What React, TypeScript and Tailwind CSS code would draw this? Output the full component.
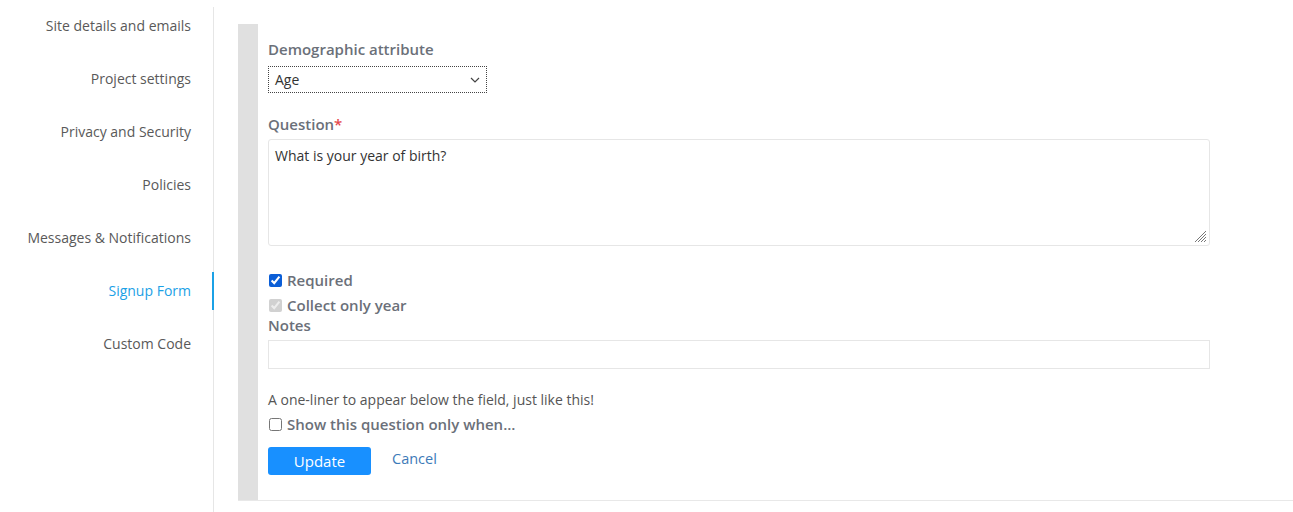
import React from "react";

const navItems = [
  "Site details and emails",
  "Project settings",
  "Privacy and Security",
  "Policies",
  "Messages & Notifications",
  "Signup Form",
  "Custom Code",
];

export default function App() {
  return (
    <div
      className="flex min-h-[512px] bg-white text-[#555]"
      style={{ fontFamily: '"Open Sans", "Liberation Sans", sans-serif' }}
    >
      <aside className="w-[214px] shrink-0 mt-[7px] border-r border-[#e6e6e6]">
        <ul className="-mt-[8px]">
          {navItems.map((item) => {
            const active = item === "Signup Form";
            return (
              <li
                key={item}
                className={`relative h-[53px] flex items-center justify-end pr-[22px] text-[14px] ${
                  active ? "text-[#1ba1e6]" : "text-[#595959]"
                }`}
              >
                {item}
                {active && (
                  <span className="absolute right-[-1px] top-[8px] h-[38px] w-[2px] bg-[#1ba1e6]" />
                )}
              </li>
            );
          })}
        </ul>
      </aside>

      <main className="flex-1 pl-[24px] pt-[24px] h-[501px]">
        <div className="flex h-[477px] border-b border-[#e8e8e8]">
          <div className="w-[20px] shrink-0 bg-[#e0e0e0]" />
          <div className="flex-1 pl-[10px] pr-[83px] pt-[15px]">
            <label className="block text-[15px] leading-[20px] font-semibold text-[#6b7079]">
              Demographic attribute
            </label>
            <div className="mt-[7px] w-[219px] h-[27px] border border-dotted border-[#444] flex items-center justify-between pl-[6px] pr-[6px] text-[14px] text-[#333]">
              <span>Age</span>
              <svg width="10" height="6" viewBox="0 0 10 6" fill="none">
                <path d="M1 1l4 4 4-4" stroke="#444" strokeWidth="1.2" />
              </svg>
            </div>

            <label className="block mt-[21px] text-[15px] leading-[20px] font-semibold text-[#6b7079]">
              Question<span className="text-[#e5484d]">*</span>
            </label>
            <div className="relative mt-[5px] h-[107px] border border-[#e6e6e6] rounded-[3px] px-[6px] py-[5px] text-[14px] text-[#333]">
              What is your year of birth?
              <svg
                className="absolute right-[2px] bottom-[2px]"
                width="12"
                height="12"
                viewBox="0 0 12 12"
              >
                <path
                  d="M11 3L3 11M11 6L6 11M11 9L9 11M11 0L0 11"
                  stroke="#777"
                  strokeWidth="1"
                />
              </svg>
            </div>

            <label className="mt-[24px] flex items-center gap-[5px] text-[15px] leading-[20px] font-semibold text-[#6b7079]">
              <input
                type="checkbox"
                defaultChecked
                className="w-[13px] h-[13px] m-0 ml-[1px] accent-[#0b5ed7]"
              />
              Required
            </label>
            <label className="mt-[5px] flex items-center gap-[5px] text-[15px] leading-[20px] font-semibold text-[#6b7079]">
              <input
                type="checkbox"
                defaultChecked
                disabled
                className="w-[13px] h-[13px] m-0 ml-[1px]"
              />
              Collect only year
            </label>
            <label className="block text-[15px] leading-[20px] font-semibold text-[#6b7079]">
              Notes
            </label>
            <div className="mt-[5px] h-[29px] border border-[#e6e6e6]" />

            <p className="mt-[21px] text-[14px] leading-[20px] text-[#555]">
              A one-liner to appear below the field, just like this!
            </p>
            <label className="mt-[4px] flex items-center gap-[5px] text-[15px] leading-[20px] font-semibold text-[#6b7079]">
              <input
                type="checkbox"
                className="w-[13px] h-[13px] m-0 ml-[1px]"
              />
              Show this question only when...
            </label>

            <div className="mt-[13px] flex items-start gap-[21px]">
              <button className="w-[103px] h-[28px] rounded-[3px] bg-[#1890ff] text-white text-[15px]">
                Update
              </button>
              <button className="mt-[1px] text-[14.5px] text-[#3d7ab8]">
                Cancel
              </button>
            </div>
          </div>
        </div>
      </main>
    </div>
  );
}
